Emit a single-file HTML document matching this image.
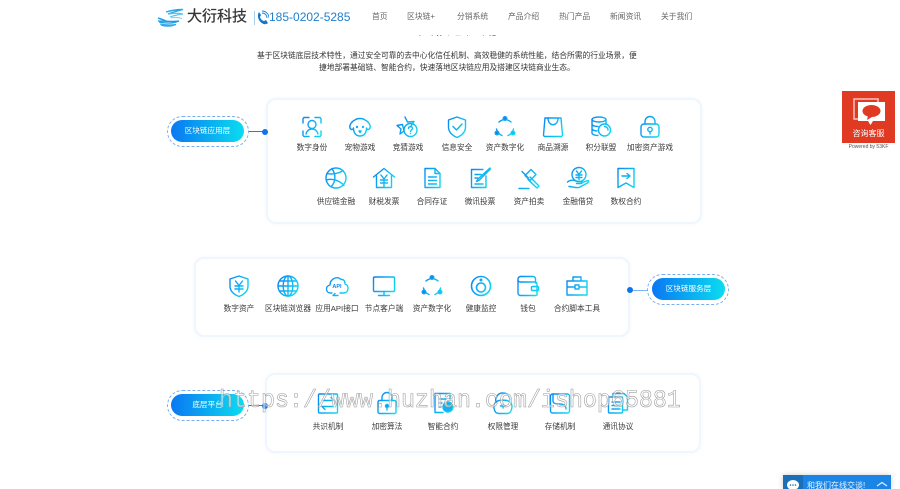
<!DOCTYPE html>
<html lang="zh">
<head>
<meta charset="utf-8">
<title>大衍科技</title>
<style>
html,body{margin:0;padding:0;background:#fff;width:900px;height:489px;overflow:hidden;font-family:"Liberation Sans","Noto Sans CJK SC",sans-serif}
.abs{position:absolute}
.head{position:absolute;left:0;top:0;width:900px;height:35px;background:#fff}
.nav{position:absolute;top:12px;font-size:7.8px;color:#666;line-height:10px;white-space:nowrap}
.p{position:absolute;font-size:7.76px;line-height:12px;color:#333;white-space:nowrap}
.card{position:absolute;width:432px;background:#fff;border:2px solid #f0f6fe;border-radius:10px;box-shadow:0 0 3px rgba(200,222,252,.25)}
.pill{position:absolute;width:73px;height:22px;border-radius:11px;background:linear-gradient(90deg,#0a78f2,#0bdcf0);color:#fff;font-size:7.6px;line-height:22px;text-align:center}
.outer{position:absolute;width:80px;height:29px;border:1px dashed #7aaef2;border-radius:16px}
.dot{position:absolute;width:6px;height:6px;border-radius:50%;background:#0d74ea}
.line{position:absolute;height:1px;background:#1b80ee}
svg text{font-family:"Liberation Sans","Noto Sans CJK SC",sans-serif}
.lb text{font-size:7.7px;fill:#3a3a3a;text-anchor:middle}
.i{fill:none;stroke:url(#g);stroke-width:1.4;stroke-linecap:round;stroke-linejoin:round}
.wm{position:absolute;left:219px;top:384px;font-family:"Liberation Mono",monospace;font-size:25px;line-height:34px;color:rgba(255,255,255,.55);-webkit-text-stroke:.6px #9c9c9c;transform:scaleX(.933);transform-origin:left top;white-space:nowrap}
</style>
</head>
<body>

<div class="abs" style="left:0;top:20px;width:900px;text-align:center;font-size:16px;line-height:20px;color:#222">三大核心应用</div>
<div class="head"></div>

<svg class="abs" style="left:157px;top:8px" width="27" height="20" viewBox="0 0 27 20" fill="none">
<path d="M9 4C14 2.500 20 1.500 26 1.500C20 3 15 4.500 11 6" stroke="#2aa6ea" stroke-width="1.400"/>
<path d="M12 6C17 5 22 5 26 6C21 6.500 17 7.500 13 9" stroke="#59c4f2" stroke-width="1.300"/>
<path d="M14 10C18 9 22 9.500 25 10.500" stroke="#7fd3f5" stroke-width="1.100"/>
<path d="M1 10C4 11 7 12 10 13.500" stroke="#27a0e6" stroke-width="1.500"/>
<path d="M1 13C7 13 14 14 22 13C16 15.500 9 15.500 2 14" stroke="#1f9be2" stroke-width="1.300"/>
<path d="M3 16C8 17 13 17.500 19 16.500C14 18.500 8 18.500 4 17" stroke="#2fa9ea" stroke-width="1.300"/>
</svg>
<div class="abs" style="left:187px;top:8px;font-size:15px;line-height:18px;color:#333;white-space:nowrap;-webkit-text-stroke:.25px #333">大衍科技</div>
<div class="abs" style="left:254px;top:11px;width:1px;height:14px;background:#a8d0ee"></div>
<svg class="abs" style="left:256px;top:10px" width="13" height="15" viewBox="0 0 13 15" fill="none">
<path d="M3 2L5 5L4 7C4.500 9 6 10.500 8 11L10 10L12 13C10 15 7 14.500 4.500 12C2 9.500 1 5 3 2Z" fill="#1577c8"/>
<path d="M6 3A5 5 0 0 1 11 8M6 1A7 7 0 0 1 13 8" stroke="#1e86d6" stroke-width=".9"/>
</svg>
<div class="abs" style="left:269px;top:10px;font-size:12px;line-height:15px;color:#1f80d0;white-space:nowrap">185-0202-5285</div>

<div class="nav" style="left:372px">首页</div>
<div class="nav" style="left:407px">区块链+</div>
<div class="nav" style="left:457px">分销系统</div>
<div class="nav" style="left:508px">产品介绍</div>
<div class="nav" style="left:559px">热门产品</div>
<div class="nav" style="left:610px">新闻资讯</div>
<div class="nav" style="left:661px">关于我们</div>

<div class="p" style="left:257px;top:50px">基于区块链底层技术特性，通过安全可靠的去中心化信任机制、高效稳健的系统性能，结合所需的行业场景，便</div>
<div class="p" style="left:319px;top:62px">捷地部署基础链、智能合约，快速落地区块链应用及搭建区块链商业生态。</div>

<div class="card" style="left:266px;top:98px;height:122px"></div>
<div class="card" style="left:194px;top:257px;height:76px"></div>
<div class="card" style="left:265px;top:373px;height:76px"></div>

<div class="line" style="left:248px;top:131px;width:17px"></div>
<div class="dot" style="left:262px;top:129px"></div>
<div class="outer" style="left:167px;top:116px"></div>
<div class="pill" style="left:171px;top:120px">区块链应用层</div>

<div class="line" style="left:630px;top:290px;width:18px;background:#7fb4f0"></div>
<div class="dot" style="left:627px;top:287px"></div>
<div class="outer" style="left:647px;top:274px"></div>
<div class="pill" style="left:652px;top:278px">区块链服务层</div>

<div class="line" style="left:248px;top:405px;width:17px"></div>
<div class="dot" style="left:262px;top:403px"></div>
<div class="outer" style="left:167px;top:390px"></div>
<div class="pill" style="left:171px;top:394px">底层平台</div>

<svg class="abs" style="left:0;top:0" width="900" height="489" viewBox="0 0 900 489">
<defs>
<linearGradient id="g" gradientUnits="userSpaceOnUse" x1="0" y1="0" x2="24" y2="12">
<stop offset="0" stop-color="#0a78f0"/><stop offset="1" stop-color="#10d6f2"/>
</linearGradient>
</defs>

<g class="lb">
<text x="312" y="150">数字身份</text><text x="360" y="150">宠物游戏</text><text x="408" y="150">竞猜游戏</text><text x="457" y="150">信息安全</text><text x="505" y="150">资产数字化</text><text x="553" y="150">商品溯源</text><text x="601" y="150">积分联盟</text><text x="650" y="150">加密资产游戏</text>
<text x="336" y="204">供应链金融</text><text x="384" y="204">财税发票</text><text x="432" y="204">合同存证</text><text x="480" y="204">微讯投票</text><text x="529" y="204">资产拍卖</text><text x="578" y="204">金融借贷</text><text x="626" y="204">数权合约</text>
<text x="239" y="311">数字资产</text><text x="288" y="311">区块链浏览器</text><text x="337" y="311">应用API接口</text><text x="384" y="311">节点客户端</text><text x="432" y="311">资产数字化</text><text x="481" y="311">健康监控</text><text x="528" y="311">钱包</text><text x="577" y="311">合约脚本工具</text>
<text x="328" y="429">共识机制</text><text x="387" y="429">加密算法</text><text x="443" y="429">智能合约</text><text x="503" y="429">权限管理</text><text x="560" y="429">存储机制</text><text x="618" y="429">通讯协议</text>
</g>

<!-- row 1 -->
<g class="i" transform="translate(300,115)"><path d="M3 8V4A1.500 1.500 0 0 1 4.500 2.500H9M15 2.500H19.500A1.500 1.500 0 0 1 21 4V8M21 16V20A1.500 1.500 0 0 1 19.500 21.500H15M9 21.500H4.500A1.500 1.500 0 0 1 3 20V16"/><circle cx="12" cy="9.500" r="4"/><path d="M6 19C7 15.500 9 14 12 14C15 14 17 15.500 18 19"/></g>
<g class="i" transform="translate(348,115)"><path d="M7 5C9 3 15 3 17 5C20 6 23 10 22 13C21 15 19 15 18.500 13C18.500 18 16 21 12 21C8 21 5.500 18 5.500 13C5 15 3 15 2 13C1 10 4 6 7 5Z"/><circle cx="9" cy="12" r=".5"/><circle cx="15" cy="12" r=".5"/><path d="M11 16H13L12 17.500Z"/></g>
<g class="i" transform="translate(396,115)"><path d="M9 2L11.500 7L18 6.500L15 11M8 16L4 19L5 14L1 10.500L6.500 9.500Z"/><circle cx="14.500" cy="15" r="6.500"/><path d="M12.500 13.500C12.500 11 16.500 11 16.500 13.500C16.500 15 14.500 15 14.500 16.500M14.500 18.500V18.600"/></g>
<g class="i" transform="translate(445,115)"><path d="M12 2L20.500 5V12C20.500 17 16.500 20.500 12 22.500C7.500 20.500 3.500 17 3.500 12V5Z"/><path d="M8 11.500L11.500 15L17 9"/></g>
<g class="i" transform="translate(493,115)"><path d="M6 7A9 9 0 0 1 18 7M20.500 14A9 9 0 0 1 15 20.500M9 20.500A9 9 0 0 1 3.500 14"/><circle cx="12" cy="3.500" r="1.800" fill="#0a88f0"/><circle cx="4" cy="18" r="1.800" fill="#0a88f0"/><circle cx="20" cy="18" r="1.800" fill="#10c0f0"/></g>
<g class="i" transform="translate(541,115)"><path d="M4 3H20L21.500 20A1.500 1.500 0 0 1 20 21.500H4A1.500 1.500 0 0 1 2.500 20Z"/><path d="M7 3C7 12 17 12 17 3"/></g>
<g class="i" transform="translate(589,115)"><ellipse cx="10" cy="4.500" rx="7" ry="2.500"/><path d="M3 4.500V18C3 19.500 6 20.500 9 20.500M3 9C3 10.500 6 11.500 9 11.500M3 13.500C3 15 6 16 8 16M17 4.500V9"/><circle cx="15.500" cy="15" r="6"/><path d="M15.500 11.500A3.500 3.500 0 0 1 19 15"/></g>
<g class="i" transform="translate(638,115)"><rect x="3" y="9" width="18" height="13" rx="3"/><path d="M7 9V6.500A5 5 0 0 1 17 6.500V9"/><circle cx="12" cy="14.500" r="2.200"/><path d="M12 16.700V19"/></g>

<!-- row 2 -->
<g class="i" transform="translate(324,166)"><circle cx="12" cy="12" r="10"/><path d="M3 7.500C8 9 16 7 19 4.500M2.500 14C9 12 16 15 20 19.500M8 2.800C12 8 12 16 7 20.700"/></g>
<g class="i" transform="translate(372,166)"><path d="M1.500 11L12 2.500L22.500 11M4.500 10V21.500H19.500V10"/><path d="M9 9L12 13L15 9M8.500 14H15.500M8.500 17H15.500M12 13V21.500"/></g>
<g class="i" transform="translate(420,166)"><path d="M5 2.500H15L20 7.500V21.500H5Z"/><path d="M15 2.500V7.500H20M8.500 11H16.500M8.500 14.500H16.500M8.500 18H16.500"/></g>
<g class="i" transform="translate(468,166)"><path d="M18 10V21.500H3.500V3.500H15"/><path d="M22 2L10 13L8.500 15.500L11 14.500L22.500 3M7 8.500H13M7 12H9.500M7 18H15"/></g>
<g class="i" transform="translate(517,166)"><path d="M8 9.500L14 3.500L19 8.500L13 14.500ZM11.500 12L5 5.500M13 11L22 20L20 22L11 13.500M2 22.500H12"/></g>
<g class="i" transform="translate(566,166)"><circle cx="13" cy="8.500" r="7"/><path d="M10.500 5L13 8.500L15.500 5M10 9H16M10 11.500H16M13 8.500V13.500M1.500 16C5 13 9 14.500 11 15.500H15C16.500 15.500 16.500 17.500 15 17.500H10.500M15 17L22 14.500C23 15 22.500 16.500 21.500 17L13 21.500C9 22 6 20.500 3 20.500"/></g>
<g class="i" transform="translate(614,166)"><path d="M4 2.500H20V21.500L12 17L4 21.500Z"/><path d="M8 10H16M13 7.500L16 10L13 12.500"/></g>

<!-- card 2 -->
<g class="i" transform="translate(227,274)"><path d="M12 2L21 5V12C21 17 17 20.500 12 22.500C7 20.500 3 17 3 12V5Z"/><path d="M8.500 7L12 11.500L15.500 7M8 12H16M8 15H16M12 11.500V18"/></g>
<g class="i" transform="translate(276,274)"><circle cx="12" cy="12" r="10"/><ellipse cx="12" cy="12" rx="4.800" ry="10"/><path d="M12 2V22M2 12H22M3.500 7H20.500M3.500 17H20.500"/></g>
<g class="i" transform="translate(325,274)"><path d="M7 19H5.500C0.500 19 0 12 5 11C5 5 12 1.500 16 5.500C20 5 20 9 20 10C24.500 11 24 19 18.500 19H15M13 21.500H8L10 19.500"/></g>
<text x="337" y="288" style="font-size:5.500px;font-weight:bold;fill:#1186ee;text-anchor:middle">API</text>
<g class="i" transform="translate(372,274)"><rect x="1.500" y="3" width="21" height="14.500" rx="1"/><path d="M12 17.500V21M6.500 21.500H17.500"/></g>
<g class="i" transform="translate(420,274)"><path d="M6 7A9 9 0 0 1 18 7M20.500 14A9 9 0 0 1 15 20.500M9 20.500A9 9 0 0 1 3.500 14"/><circle cx="12" cy="3.500" r="1.800" fill="#0a88f0"/><circle cx="4" cy="18" r="1.800" fill="#0a88f0"/><circle cx="20" cy="18" r="1.800" fill="#10c0f0"/></g>
<g class="i" transform="translate(469,274)"><circle cx="12" cy="12" r="9.500" stroke-width="1.600"/><circle cx="12" cy="13.500" r="4.500" stroke-width="1.600"/><circle cx="12" cy="6" r=".8" fill="#0a88f0"/></g>
<g class="i" transform="translate(516,274)"><path d="M20 21.500H4.500A2.500 2.500 0 0 1 2 19V5A2.500 2.500 0 0 1 4.500 2.500H17A2.500 2.500 0 0 1 19.500 5V9M2 6A2.500 2.500 0 0 0 4.500 8H19A2 2 0 0 1 21 10V21"/><rect x="15.500" y="12.500" width="7" height="4" rx="1"/></g>
<g class="i" transform="translate(565,274)"><path d="M2 7H22V21H2ZM8 7V3H16V7M2 13H10M14 13H22"/><rect x="10" y="11" width="4" height="4"/></g>

<!-- card 3 -->
<g class="i" transform="translate(316,391)"><rect x="2.500" y="3" width="19" height="19" rx="1"/><path d="M7 9.500H18L15 6.500M17 15.500H6L9 18.500"/></g>
<g class="i" transform="translate(375,391)"><rect x="3" y="9.500" width="18" height="13" rx="1.500"/><path d="M7 9.500V6.500A5 5 0 0 1 17 6.500V9.500"/><circle cx="12" cy="15" r="1.500" fill="#0a88f0"/><path d="M12 16V19"/></g>
<g class="i" transform="translate(431,391)"><path d="M19 9V2.500H4V21.500H12"/><path d="M8 8H15M8 12H11M8 16H10"/><circle cx="17" cy="16" r="5" fill="#15b0ee"/></g>
<g class="i" transform="translate(491,391)"><path d="M5 11A7 7 0 0 1 12 2C16 2 19 5 19 9M5 11C1.500 14 2.500 22.500 8 22.500H16C21 22.500 22.500 14 19 11C16 8.500 8 8.500 5 11Z"/><path d="M12 13V17M9.500 15H14.500"/></g>
<g class="i" transform="translate(548,391)"><rect x="2.500" y="3" width="19" height="19" rx="2"/><path d="M5 3V10C5 13 9 13 12 13C15 13 18 14 18 18"/></g>
<g class="i" transform="translate(606,391)"><rect x="2.500" y="6" width="14" height="16" rx="1"/><path d="M7 6V2.500H18L21.500 6V19H16.500M6 11H14M6 14.500H14M6 18H14"/></g>
</svg>

<div class="wm">https://www.huzhan.com/ishop65881</div>

<div class="abs" style="left:842px;top:91px;width:53px;height:52px;background:#e03a23"></div>
<svg class="abs" style="left:842px;top:91px" width="53" height="52" viewBox="0 0 53 52">
<rect x="12" y="8" width="24" height="20" fill="none" stroke="#f7c4bb" stroke-width="1.500"/>
<path d="M16 11H43V30H31L28.500 34L26 30H16Z" fill="#fff"/>
<ellipse cx="29.500" cy="20" rx="9" ry="6" fill="#e03a23"/>
<path d="M26 25L25 29L30 26Z" fill="#e03a23"/>
<text x="26.500" y="45" style="font-size:8px;fill:#fff;text-anchor:middle">咨询客服</text>
</svg>
<div class="abs" style="left:842px;top:144px;width:53px;text-align:center;font-size:5px;line-height:6px;color:#555;white-space:nowrap">Powered by 53KF</div>

<div class="abs" style="left:783px;top:475px;width:108px;height:14px;background:#1a85e6;box-shadow:0 0 6px rgba(0,0,0,.2)"></div>
<div class="abs" style="left:783px;top:475px;width:20px;height:14px;background:#1a6fb8"></div>
<svg class="abs" style="left:783px;top:475px" width="108" height="14" viewBox="0 0 108 14">
<ellipse cx="10" cy="10" rx="6" ry="5" fill="#fff"/>
<circle cx="7.500" cy="10" r=".8" fill="#1269b8"/><circle cx="10" cy="10" r=".8" fill="#1269b8"/><circle cx="12.500" cy="10" r=".8" fill="#1269b8"/>
<path d="M94 11L99 7.500L104 11" fill="none" stroke="#dff0ff" stroke-width="1.200"/>
<text x="24" y="13" style="font-size:8px;fill:#e8f4ff">和我们在线交谈!</text>
</svg>

</body>
</html>
